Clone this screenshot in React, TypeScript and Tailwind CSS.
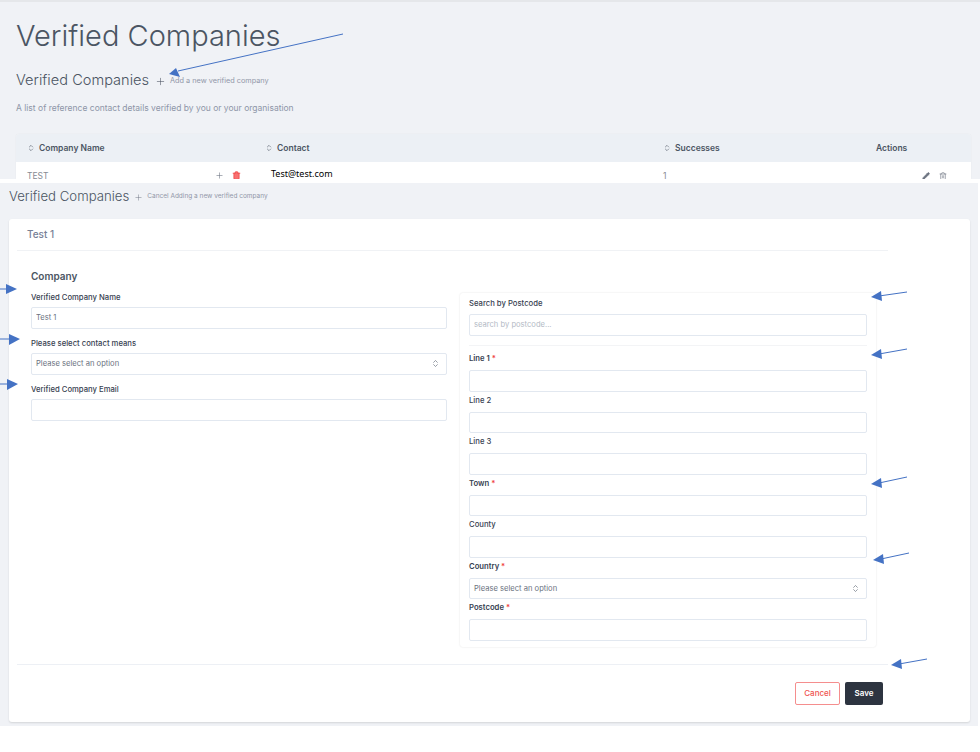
import React from "react";
import { ChevronsUpDown, Pencil, Plus, Trash2 } from "lucide-react";

const inputClass =
  "block h-[21.5px] w-full rounded-[2px] border border-[#e2e8f0] bg-white px-[4px] text-[7.6px] text-[#6b7280] placeholder:text-[#b3bac5] outline-none";

const labelClass = "block h-3 text-[7.7px] leading-3 text-[#374151]";

function Required() {
  return <span className="text-[#ef4444]"> *</span>;
}

function SelectBox() {
  return (
    <div className="flex h-[21.5px] w-full items-center justify-between rounded-[2px] border border-[#e2e8f0] bg-white pl-[4px] pr-[6px] text-[7.6px] text-[#6b7280]">
      <span>Please select an option</span>
      <ChevronsUpDown size={9} strokeWidth={1.5} className="text-[#4b5563]" />
    </div>
  );
}

function AddressField({
  label,
  required,
  select,
}: {
  label: string;
  required?: boolean;
  select?: boolean;
}) {
  return (
    <div className="mb-[3px]">
      <label className={`mb-[5px] ${labelClass} ${required ? "font-semibold" : "font-medium"}`}>
        {label}
        {required && <Required />}
      </label>
      {select ? <SelectBox /> : <input className={inputClass} />}
    </div>
  );
}

function HeadCell({ label, className }: { label: string; className?: string }) {
  return (
    <div className={`flex items-center gap-[4px] ${className ?? ""}`}>
      <ChevronsUpDown size={8} strokeWidth={1.75} className="text-[#4b5563]" />
      <span>{label}</span>
    </div>
  );
}

function Arrows() {
  const lines = [
    [343, 34, 178, 71],
    [0, 289, 8, 289],
    [0, 339, 11, 339],
    [0, 384, 9, 384],
    [907, 292, 879, 296],
    [907, 349, 879, 354],
    [907, 477, 879, 483],
    [909, 553, 881, 559],
    [927, 659, 899, 664],
  ];
  const heads = [
    "169,74 176,68 180,77",
    "17,289 6,284 6,294",
    "20,339 9,334 9,345",
    "18,384 7,379 7,390",
    "871,297 881,291 882,301",
    "871,355 881,349 882,359",
    "871,484 881,478 882,488",
    "873,560 883,554 884,564",
    "891,665 901,659 902,669",
  ];
  return (
    <svg
      className="pointer-events-none absolute left-0 top-0"
      width="980"
      height="752"
      viewBox="0 0 980 752"
    >
      {lines.map((l, i) => (
        <line key={i} x1={l[0]} y1={l[1]} x2={l[2]} y2={l[3]} stroke="#4472c4" strokeWidth="1" />
      ))}
      {heads.map((p, i) => (
        <polygon key={i} points={p} fill="#4472c4" />
      ))}
    </svg>
  );
}

export default function App() {
  return (
    <div className="relative h-[752px] w-[980px] overflow-hidden bg-white font-['Inter',sans-serif]">
      {/* first screenshot, cut off under the table row */}
      <section className="h-[179px] overflow-hidden border-t-2 border-[#e5e7ea] bg-[#f0f2f6] px-4">
        <h1 className="pt-[14px] text-[29px] font-light leading-10 text-[#4b5563]">
          Verified Companies
        </h1>
        <div className="mt-[13px] flex h-6 items-center">
          <h2 className="text-[14.6px] font-light text-[#4b5563]">Verified Companies</h2>
          <Plus size={11} strokeWidth={1.25} className="ml-[6px] text-[#4b5563]" />
          <span className="ml-[4px] text-[7.3px] text-[#9097a8]">Add a new verified company</span>
        </div>
        <p className="mt-[9px] text-[8.5px] leading-3 text-[#8e96a8]">
          A list of reference contact details verified by you or your organisation
        </p>
        <div className="mt-[20px] w-[955px] rounded-t-[3px] bg-white shadow-[0_0_1px_rgba(0,0,0,0.12)]">
          <div className="grid h-[28px] grid-cols-[249px_398px_205px_103px] items-center rounded-t-[3px] bg-[#ecf0f5] text-[8.5px] font-semibold text-[#4b5563]">
            <HeadCell label="Company Name" className="pl-[11px]" />
            <HeadCell label="Contact" />
            <HeadCell label="Successes" />
            <div className="pl-[8px]">Actions</div>
          </div>
          <div className="grid h-[17px] grid-cols-[249px_398px_205px_103px] items-center pt-[9px] text-[8.5px] leading-[8px] text-[#868b94]">
            <div className="flex items-center justify-between pl-[11px] pr-[24px]">
              <span>TEST</span>
              <div className="flex items-center gap-[8px]">
                <Plus size={9} strokeWidth={1.5} className="text-[#6b7280]" />
                <Trash2 size={9} strokeWidth={2} fill="#f87171" className="text-[#ef4444]" />
              </div>
            </div>
            <div className="-mt-[4px] pl-[6px] font-['Noto_Sans',sans-serif] text-[9px] text-black">
              Test@test.com
            </div>
            <div>1</div>
            <div className="flex items-center justify-end gap-[9px] pr-[24px]">
              <Pencil size={8} strokeWidth={2} fill="#6b7280" className="text-[#6b7280]" />
              <Trash2 size={8} strokeWidth={1.75} className="text-[#6b7280]" />
            </div>
          </div>
        </div>
      </section>

      {/* second screenshot, the add form */}
      <section className="mt-[4px] h-[543px] w-[978px] bg-[#f0f2f6] pl-[9px] pr-[8px]">
        <div className="flex h-[36px] items-center pb-[12px] pt-[4px]">
          <h2 className="text-[13.2px] font-light text-[#4b5563]">Verified Companies</h2>
          <Plus size={9} strokeWidth={1.25} className="ml-[5px] text-[#6b7280]" />
          <span className="ml-[4px] text-[6.5px] text-[#9097a8]">
            Cancel Adding a new verified company
          </span>
        </div>

        <div className="h-[503px] w-[961px] rounded-[3px] bg-white pl-[8px] pr-[82px] shadow-[0_1px_2px_rgba(0,0,0,0.12)]">
          <div className="flex h-[32px] items-center border-b border-[#f0f2f5] pl-[10px] text-[10px] font-medium text-[#778096]">
            Test 1
          </div>

          <div className="flex items-start pl-[14px] pr-[11px]">
            <div className="w-[416px] shrink-0">
              <h3 className="pt-[19px] text-[10px] font-semibold leading-3 text-[#4b5563]">Company</h3>
              <div className="mt-[10px] flex flex-col gap-[9.5px]">
                <div>
                  <label className={`mb-[3px] font-medium ${labelClass}`}>Verified Company Name</label>
                  <input className={inputClass} defaultValue="Test 1" />
                </div>
                <div>
                  <label className={`mb-[3px] font-medium ${labelClass}`}>Please select contact means</label>
                  <SelectBox />
                </div>
                <div>
                  <label className={`mb-[3px] font-medium ${labelClass}`}>Verified Company Email</label>
                  <input className={inputClass} />
                </div>
              </div>
            </div>

            <div className="ml-[13px] mt-[42px] h-[354px] w-[416px] shrink-0 rounded-[3px] pl-[9px] pr-[9px] pt-[5px] shadow-[0_0_2px_rgba(0,0,0,0.12)]">
              <label className={`mb-[4px] font-medium ${labelClass}`}>Search by Postcode</label>
              <input className={inputClass} placeholder="search by postcode..." />
              <div className="mb-[7.5px] mt-[9px] border-t border-[#f3f4f6]" />
              <AddressField label="Line 1" required />
              <AddressField label="Line 2" />
              <AddressField label="Line 3" />
              <AddressField label="Town" required />
              <AddressField label="County" />
              <AddressField label="Country" required select />
              <AddressField label="Postcode" required />
            </div>
          </div>

          <div className="mt-[17px] border-t border-[#edf0f5]" />
          <div className="mt-[17px] flex justify-end gap-[5px] pr-[5px]">
            <button className="h-[23px] w-[45px] rounded-[2px] border border-[#f58e8e] bg-white pb-[2px] text-[8px] font-medium text-[#ef5350]">
              Cancel
            </button>
            <button className="h-[23px] w-[38px] rounded-[2px] bg-[#2d3440] pb-[2px] text-[8px] font-semibold text-white">
              Save
            </button>
          </div>
        </div>
      </section>

      <Arrows />
    </div>
  );
}
